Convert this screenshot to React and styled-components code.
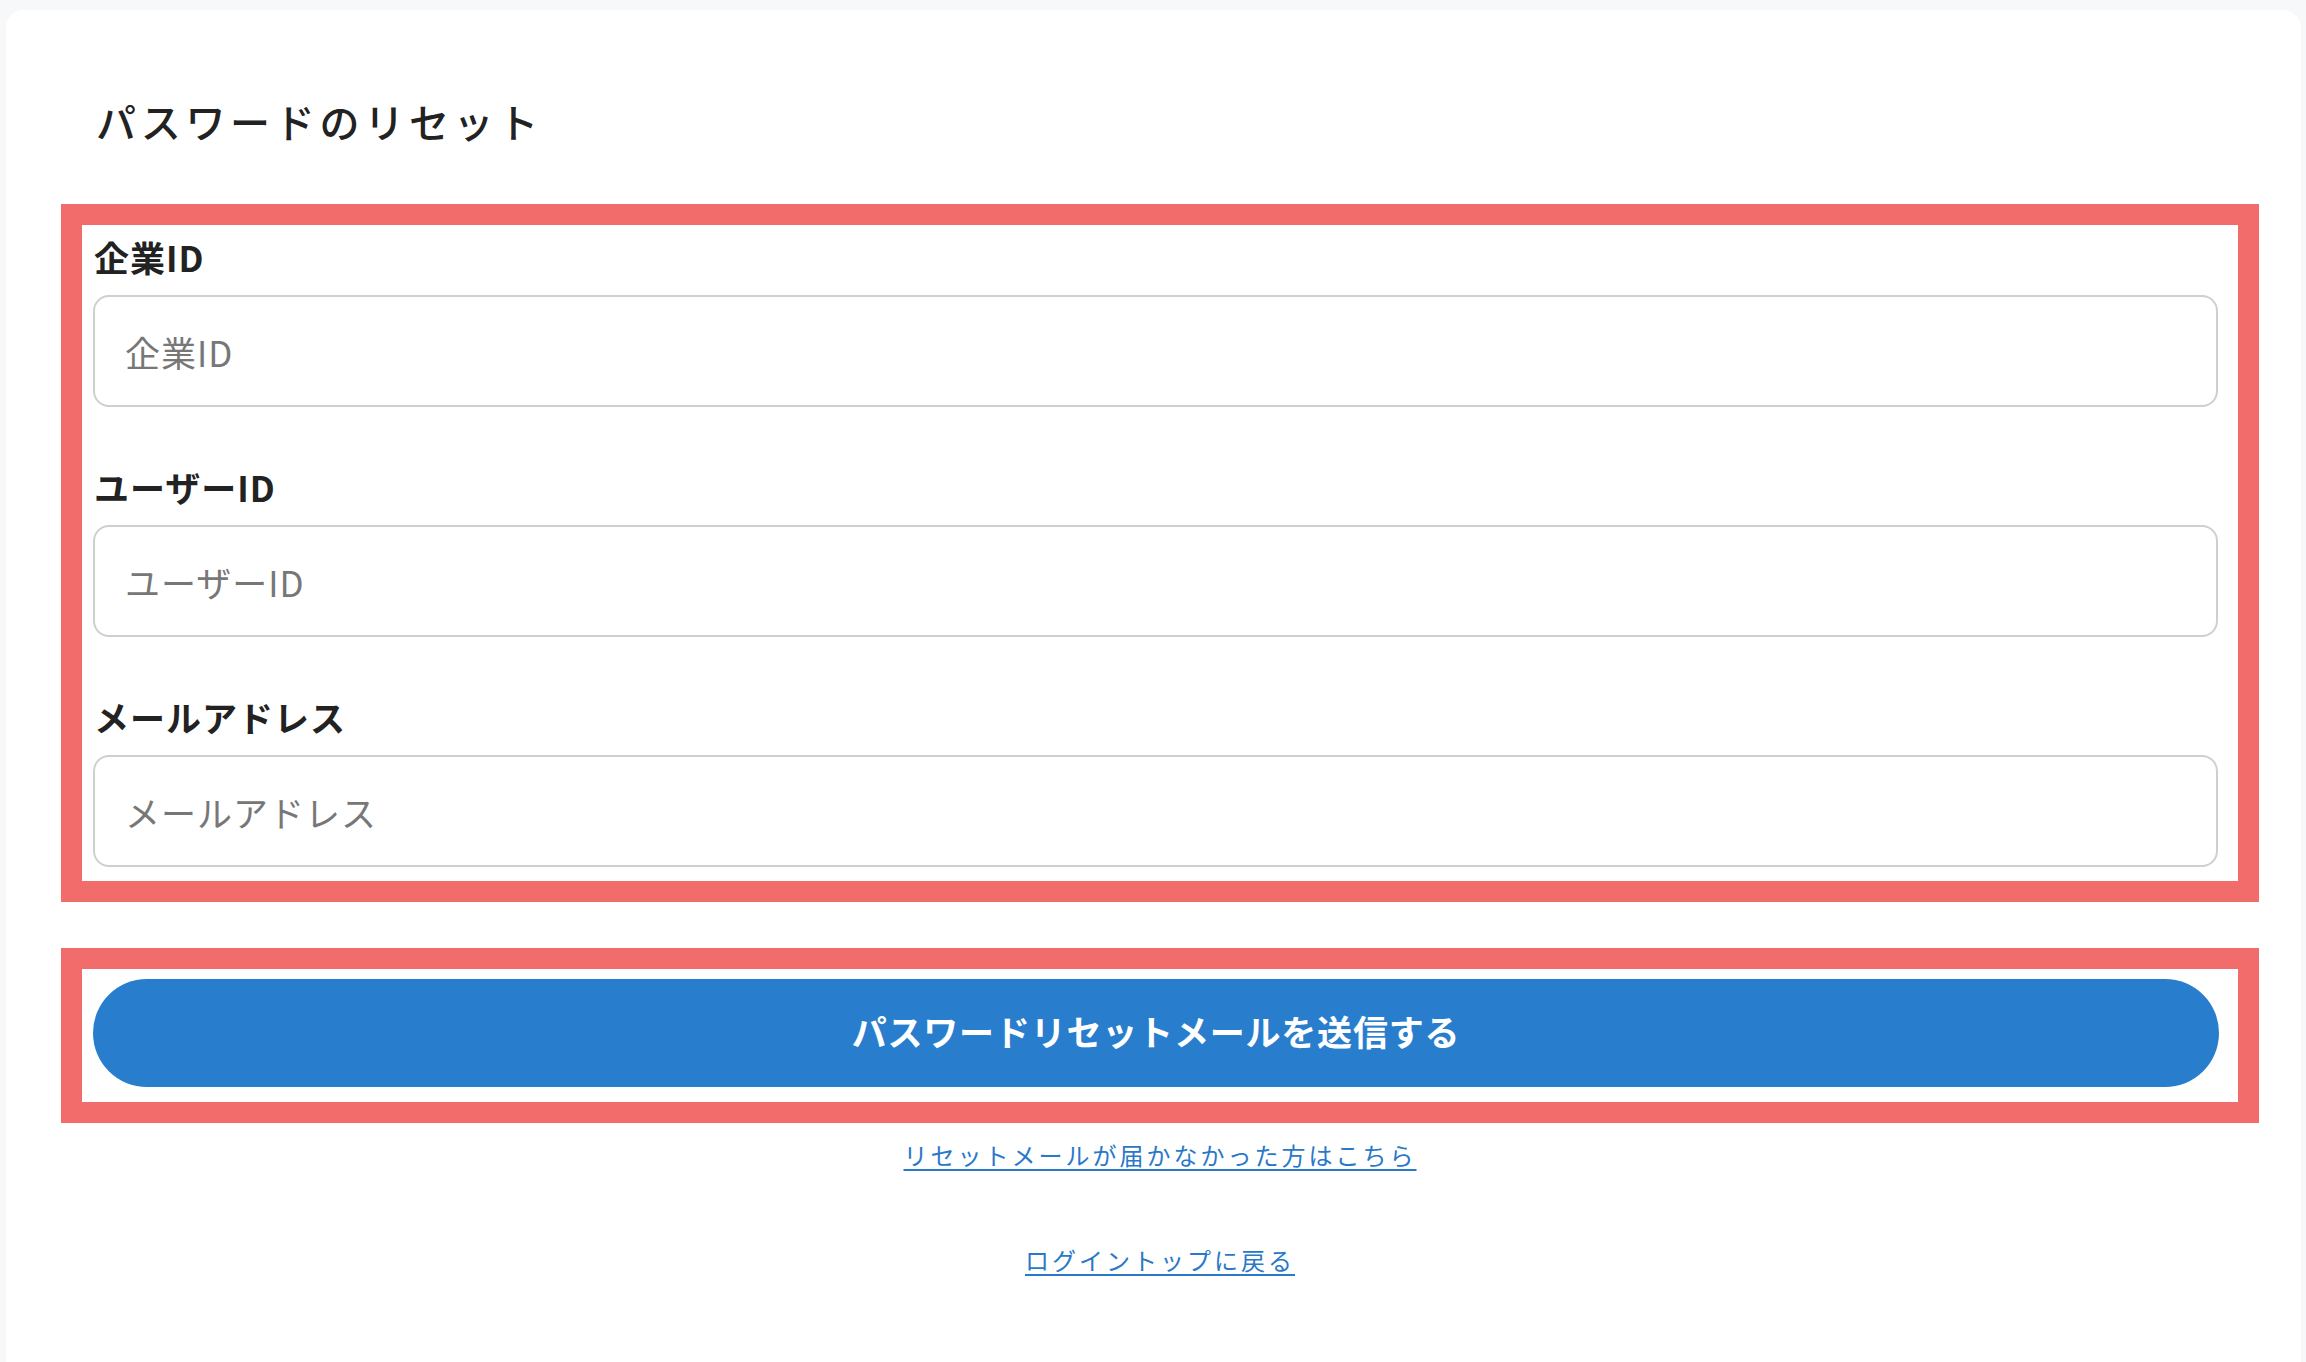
import styled, { createGlobalStyle } from "styled-components";

const GlobalStyle = createGlobalStyle`
  html, body {
    margin: 0;
    padding: 0;
    background: #f7f8fa;
  }
  body {
    font-family: "Noto Sans CJK JP", "Noto Sans", sans-serif;
    color: #222;
  }
`;

const fields = [
  { id: "company", label: "企業ID" },
  { id: "user", label: "ユーザーID" },
  { id: "mail", label: "メールアドレス" },
];

export default function App() {
  return (
    <>
      <GlobalStyle />
      <Page>
        <Card>
          <Title>パスワードのリセット</Title>
          <Highlight>
            {fields.map((f) => (
              <Field key={f.id}>
                <Label htmlFor={f.id}>{f.label}</Label>
                <Input id={f.id} type="text" placeholder={f.label} />
              </Field>
            ))}
          </Highlight>
          <Highlight $button>
            <SubmitButton type="button">パスワードリセットメールを送信する</SubmitButton>
          </Highlight>
          <Links>
            <TextLink href="#">リセットメールが届かなかった方はこちら</TextLink>
            <TextLink href="#">ログイントップに戻る</TextLink>
          </Links>
        </Card>
      </Page>
    </>
  );
}

const Page = styled.div`
  min-height: 100vh;
  padding: 10px 5px 0 6px;
  box-sizing: border-box;
  display: flex;
`;

const Card = styled.div`
  flex: 1;
  background: #fff;
  border-radius: 18px 18px 0 0;
  padding: 87px 42px 40px 55px;
  display: flex;
  flex-direction: column;
`;

const Title = styled.h1`
  margin: 0 0 59px;
  padding-left: 35px;
  font-size: 40px;
  line-height: 48px;
  font-weight: 500;
  letter-spacing: 4.7px;
  color: #222;
`;

const Highlight = styled.div`
  border: 21px solid #f36c6c;
  padding: ${(p) => (p.$button ? "10px 19px 15px 11px" : "11px 20px 14px 12px")};
  margin-top: ${(p) => (p.$button ? "46px" : "0")};
  display: flex;
  flex-direction: column;
  gap: 59px;
`;

const Field = styled.div`
  display: flex;
  flex-direction: column;
  gap: 17px;
`;

const Label = styled.label`
  font-size: 35px;
  line-height: 42px;
  font-weight: 700;
  letter-spacing: 1px;
  color: #222;
`;

const Input = styled.input`
  height: 112px;
  margin-left: -1px;
  box-sizing: border-box;
  border: 2px solid #cfcfcf;
  border-radius: 16px;
  padding: 0 30px;
  font-family: inherit;
  font-size: 35px;
  letter-spacing: 1px;
  color: #222;
  background: #fff;
  outline: none;

  &::placeholder {
    color: #777;
  }
`;

const SubmitButton = styled.button`
  height: 108px;
  border: none;
  border-radius: 54px;
  padding: 0 0 5px;
  background: #287ecd;
  color: #fff;
  font-family: inherit;
  font-size: 35px;
  font-weight: 700;
  letter-spacing: 0.8px;
  cursor: pointer;
`;

const Links = styled.div`
  margin-top: 14px;
  display: flex;
  flex-direction: column;
  align-items: center;
  gap: 69px;
`;

const TextLink = styled.a`
  font-size: 24px;
  line-height: 36px;
  letter-spacing: 3px;
  color: #2a78c8;
  text-decoration: underline;
  text-decoration-thickness: 2px;
  text-underline-offset: 4px;
`;
